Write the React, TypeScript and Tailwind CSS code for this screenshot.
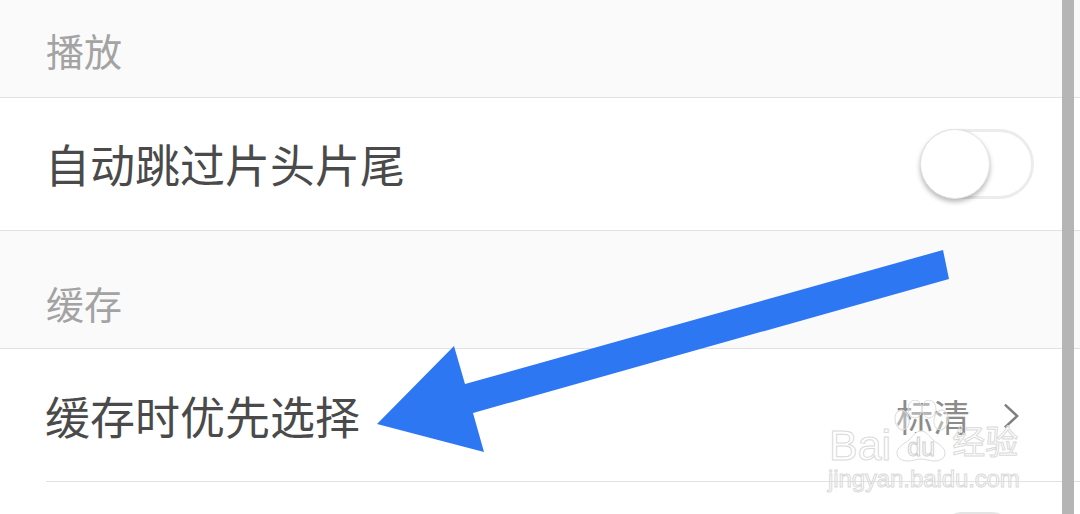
const font = "font-['Noto_Sans_CJK_SC','Noto_Sans',sans-serif]";

function SectionHeader({ label, height, pad }: { label: string; height: string; pad: string }) {
  return (
    <div className={`${height} flex items-end bg-[#fafafa] border-b border-[#e2e2e2] pl-[46px]`}>
      <span className={`text-[38px] leading-[50px] ${pad} text-[#a3a3a3]`}>{label}</span>
    </div>
  );
}

function Toggle() {
  return (
    <div className="flex w-[114px] h-[70px] rounded-full border-[3px] border-[#ececec] bg-white">
      <div className="w-[70px] h-[70px] shrink-0 -m-[3px] rounded-full bg-white border border-[#e4e4e4] shadow-[0_3px_5px_rgba(0,0,0,0.28)]" />
    </div>
  );
}

function Watermark() {
  return (
    <div className="absolute left-[829px] top-[400px] w-[192px] flex flex-col font-['Liberation_Sans',sans-serif] text-transparent select-none">
      <div className="flex items-end h-[62px] gap-[2px]">
        <span className="text-[43px] leading-[50px] mb-[-8px] [-webkit-text-stroke:1px_#dadada]">Bai</span>
        <div className="grid w-[56px] h-[62px] shrink-0">
          <svg viewBox="0 0 56 62" className="[grid-area:1/1] w-[56px] h-[62px]" fill="rgba(255,255,255,0.35)" stroke="#dcdcdc" strokeWidth="1">
            <ellipse cx="9" cy="20" rx="7" ry="10" transform="rotate(-10 9 20)" />
            <ellipse cx="22" cy="9" rx="7" ry="9" />
            <ellipse cx="36" cy="9" rx="7" ry="9" />
            <ellipse cx="48" cy="20" rx="7" ry="10" transform="rotate(10 48 20)" />
            <path d="M28 31c5 0 8 5 12 9 5 4 12 7 12 13 0 6-6 8-11 8-5 0-8-2-13-2s-8 2-13 2c-5 0-11-2-11-8 0-6 7-9 12-13 4-4 7-9 12-9z" fill="#fff" />
          </svg>
          <span className="[grid-area:1/1] self-end justify-self-center text-[25px] leading-[30px] [-webkit-text-stroke:1px_#d0d0d0]">du</span>
        </div>
        <span className={`${font} text-[33px] leading-[44px] ml-[1px] [-webkit-text-stroke:1px_#dadada]`}>经验</span>
      </div>
      <span className="text-[24px] leading-[30px] mt-[2px] -ml-[1px] tracking-[-0.1px] whitespace-nowrap [-webkit-text-stroke:1px_#dadada]">jingyan.baidu.com</span>
    </div>
  );
}

export default function App() {
  return (
    <div className={`relative w-[1080px] h-[514px] overflow-hidden bg-white ${font}`}>
      <SectionHeader label="播放" height="h-[98px]" pad="pb-[22px]" />
      <div className="h-[133px] flex items-center justify-between bg-white border-b border-[#e2e2e2] pl-[45px] pr-[46px]">
        <span className="text-[45px] leading-[50px] text-[#4a4a4a]">自动跳过片头片尾</span>
        <Toggle />
      </div>
      <SectionHeader label="缓存" height="h-[118px]" pad="pb-[20px]" />
      <div className="h-[133px] flex items-center justify-between bg-white pl-[45px] pr-[60px]">
        <span className="text-[45px] leading-[50px] text-[#4a4a4a]">缓存时优先选择</span>
        <div className="flex items-center gap-[33px]">
          <span className="text-[37px] leading-[50px] text-[#8c8c8c]">标清</span>
          <svg viewBox="0 0 18 28" className="w-[17px] h-[28px]" fill="none" stroke="#808080" strokeWidth="2.6">
            <path d="M2 2l13 12L2 26" />
          </svg>
        </div>
      </div>
      <div className="ml-[46px] h-[1px] -mt-[1px] bg-[#e2e2e2]" />

      {/* peek of the next row's switch */}
      <div className="ml-[942px] mt-[30px] w-[70px] h-[40px] rounded-full border-[2px] border-[#e4e4e4]" />

      <Watermark />

      {/* scrollbar */}
      <div className="absolute left-[1062px] top-0 w-[12px] h-[514px] bg-[#b5b5b5]" />

      {/* annotation arrow */}
      <svg className="absolute left-0 top-0 w-[1080px] h-[514px]" viewBox="0 0 1080 514">
        <polygon points="377,424 454,346 465,384 943,250 949,279 473,413 484,452" fill="#2e77f2" />
      </svg>
    </div>
  );
}
